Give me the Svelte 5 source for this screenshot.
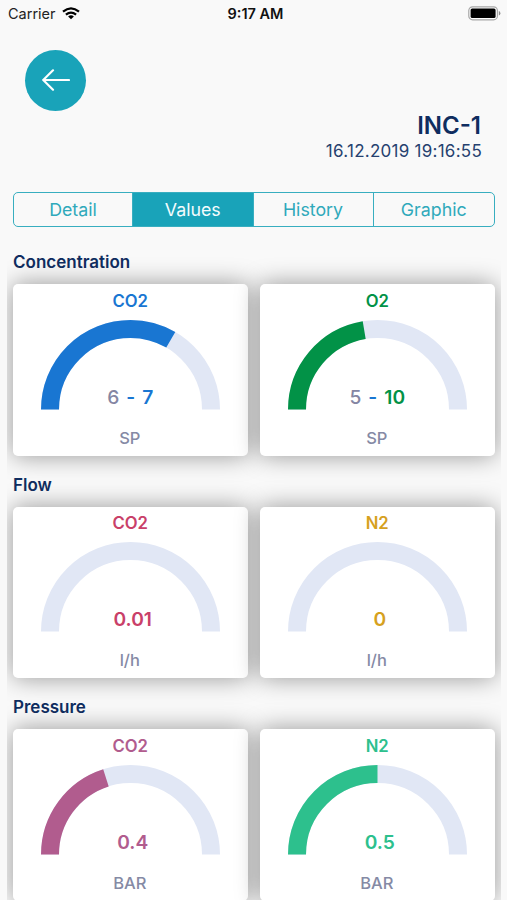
<script>
  const tabs = ['Detail', 'Values', 'History', 'Graphic'];
  const active = 'Values';

  const groups = [
    {
      title: 'Concentration',
      gauges: [
        { name: 'CO2', color: '#1976d2', from: '6', value: '7', unit: 'SP', part: 0.667 },
        { name: 'O2', color: '#029247', from: '5', value: '10', unit: 'SP', part: 0.447 }
      ]
    },
    {
      title: 'Flow',
      gauges: [
        { name: 'CO2', color: '#c94069', value: '0.01', unit: 'l/h', part: 0 },
        { name: 'N2', color: '#d6a11e', value: '0', unit: 'l/h', part: 0 }
      ]
    },
    {
      title: 'Pressure',
      gauges: [
        { name: 'CO2', color: '#b15c8e', value: '0.4', unit: 'BAR', part: 0.401 },
        { name: 'N2', color: '#2dc08d', value: '0.5', unit: 'BAR', part: 0.5 }
      ]
    }
  ];
  const arc = 'M9 89.5 A80.5 80.5 0 0 1 170 89.5';
</script>

<div class="screen">
  <div class="status">
    <div class="carrier">
      <span>Carrier</span>
      <svg width="18" height="13" viewBox="0 0 18 13" fill="none" stroke="#000" stroke-width="2.2">
        <path d="M1 4.7 Q9 -2 17 4.7" />
        <path d="M3.9 7.7 Q9 3.5 14.1 7.7" />
        <path d="M9 12.3 L6.1 9.5 Q9 7.2 11.9 9.5 Z" fill="#000" stroke="none" />
      </svg>
    </div>
    <b>9:17 AM</b>
    <svg class="battery" width="33" height="15" viewBox="0 0 33 15">
      <rect x="0.8" y="0.8" width="28.6" height="13" rx="3.8" fill="#fff" stroke="#a7a7a7" stroke-width="1.2" />
      <rect x="2.6" y="2.5" width="25" height="9.6" rx="1.6" fill="#000" />
      <path d="M30.8 5 Q32.4 5.6 32.4 7.3 Q32.4 9 30.8 9.6 Z" fill="#8d8d8d" />
    </svg>
  </div>

  <button class="back" aria-label="Back">
    <svg width="28" height="22" viewBox="0 0 28 22" fill="none" stroke="#fff" stroke-width="2.2" stroke-linecap="round">
      <path d="M27 11 H1.2 M11 1.3 L1.2 11 L11 20.7" />
    </svg>
  </button>

  <header>
    <h1>INC-1</h1>
    <time>16.12.2019 19:16:55</time>
  </header>

  <nav>
    {#each tabs as tab}
      <button class:active={tab === active}>{tab}</button>
    {/each}
  </nav>

  <main>
    {#each groups as group}
      <section>
        <h2>{group.title}</h2>
        <div class="row">
          {#each group.gauges as g}
            <article>
              <h3 style:color={g.color}>{g.name}</h3>
              <div class="gauge">
                <svg width="179" height="90" viewBox="0 0 179 90" fill="none" stroke-width="18">
                  <path d={arc} stroke="#e1e7f5" />
                  {#if g.part}
                    <path d={arc} stroke={g.color} pathLength="1" stroke-dasharray="{g.part} 2" />
                  {/if}
                </svg>
                <div class="value" class:single={!g.from} style:color={g.color}>
                  {#if g.from}<span class="from">{g.from}</span><span class="dash">-</span>{/if}<span>{g.value}</span>
                </div>
              </div>
              <div class="unit">{g.unit}</div>
            </article>
          {/each}
        </div>
      </section>
    {/each}
  </main>
</div>

<style>
  :global(body) {
    background: #f9f9f9;
    overflow: hidden;
  }
  .screen {
    width: 507px;
    height: 900px;
    overflow: hidden;
    background: #f9f9f9;
    font-family: Inter, 'Liberation Sans', sans-serif;
    color: #0f2d60;
    display: flex;
    flex-direction: column;
  }
  .status {
    height: 27px;
    flex: none;
    display: grid;
    grid-template-columns: 1fr auto 1fr;
    align-items: center;
    padding: 0 6px 0 8px;
    box-sizing: border-box;
    color: #111;
    font-size: 14.5px;
  }
  .carrier {
    display: flex;
    align-items: center;
    gap: 6px;
    color: #222;
  }
  .status b {
    font-weight: 600;
    padding-left: 2px;
  }
  .battery {
    justify-self: end;
  }
  button {
    font: inherit;
    border: 0;
    padding: 0;
    margin: 0;
  }
  .back {
    flex: none;
    width: 61px;
    height: 61px;
    margin: 23px 0 0 25.3px;
    border-radius: 50%;
    background: #19a3b9;
    display: flex;
    align-items: center;
    justify-content: center;
  }
  .back svg {
    display: block;
    margin-top: -1px;
  }
  header {
    flex: none;
    height: 80.5px;
    padding-top: 1px;
    box-sizing: border-box;
    padding-right: 25px;
    text-align: right;
  }
  h1 {
    margin: 0;
    padding-right: 1px;
    font-size: 24px;
    line-height: 28px;
    font-weight: 600;
  }
  time {
    display: block;
    font-size: 17px;
    line-height: 22px;
    letter-spacing: 0.26px;
    color: #26416f;
  }
  nav {
    flex: none;
    display: grid;
    grid-template-columns: 118px 120.5px 120px 1fr;
    width: 482px;
    height: 35.5px;
    box-sizing: border-box;
    margin-left: 13px;
    border: 1.5px solid #38aec0;
    border-radius: 5px;
    overflow: hidden;
  }
  nav button {
    background: none;
    color: #2fa9bb;
    font-size: 17.8px;
  }
  nav button + button {
    border-left: 1.5px solid #38aec0;
  }
  nav .active {
    background: #19a3b9;
    color: #f4fcfd;
  }
  main {
    flex: 1;
    min-height: 0;
    width: 494px;
    margin-left: 7px;
    box-sizing: border-box;
    padding: 22px 6.5px 0 6px;
    overflow: hidden;
  }
  section {
    height: 222.5px;
  }
  h2 {
    margin: 0;
    height: 35px;
    font-size: 17px;
    line-height: 26px;
    font-weight: 600;
  }
  .row {
    display: flex;
    gap: 12.5px;
  }
  article {
    flex: 1;
    height: 171.5px;
    background: #fff;
    border-radius: 5px;
    box-shadow: 0 0 24px rgba(0, 0, 0, 0.4);
    display: flex;
    flex-direction: column;
    align-items: center;
  }
  h3 {
    margin: 6.5px 0 8px;
    font-size: 16.7px;
    line-height: 21px;
    font-weight: 600;
  }
  .gauge {
    display: grid;
  }
  .gauge svg {
    grid-area: 1 / 1;
    display: block;
  }
  .value {
    grid-area: 1 / 1;
    align-self: end;
    display: flex;
    justify-content: center;
    gap: 7px;
    font-size: 19.2px;
    line-height: 25px;
    font-weight: 600;
  }
  .single {
    padding-left: 5px;
  }
  .from {
    color: #8486a3;
    font-weight: 500;
  }
  .dash {
    color: #1976d2;
  }
  .unit {
    margin-top: 17px;
    padding-right: 1px;
    font-size: 16.5px;
    line-height: 22px;
    font-weight: 550;
    color: #858aa5;
  }
</style>
